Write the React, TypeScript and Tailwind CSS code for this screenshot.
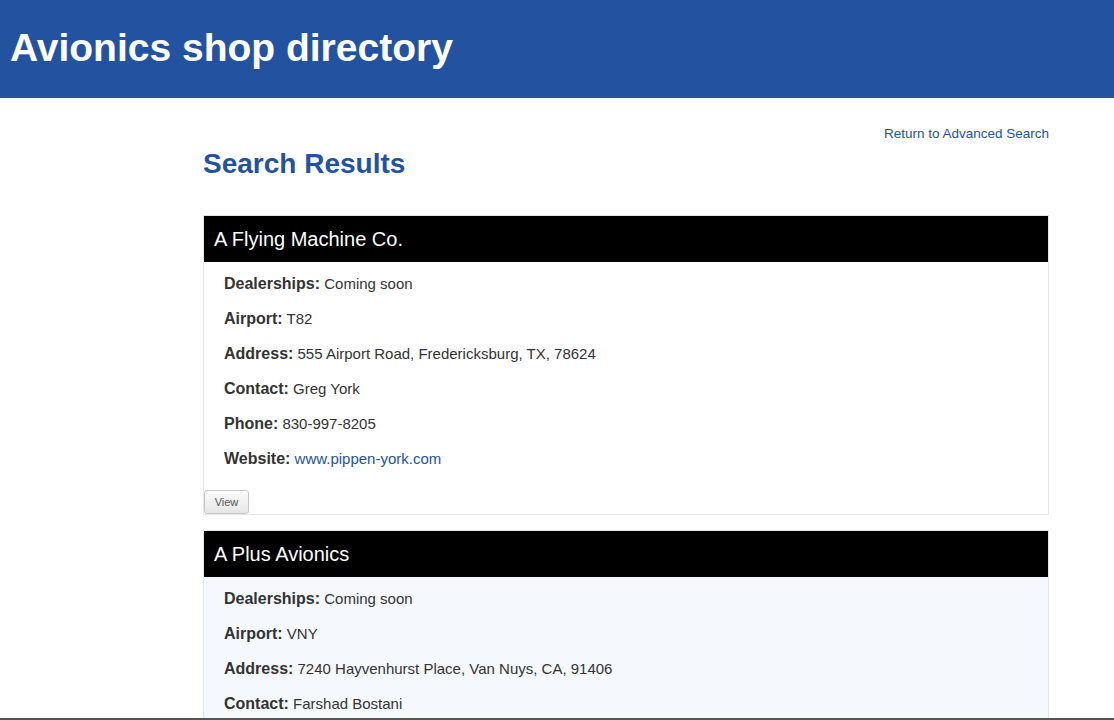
const shops = [
  {
    name: "A Flying Machine Co.",
    airport: "T82",
    address: "555 Airport Road, Fredericksburg, TX, 78624",
    contact: "Greg York",
    phone: "830-997-8205",
    website: "www.pippen-york.com",
  },
  {
    name: "A Plus Avionics",
    airport: "VNY",
    address: "7240 Hayvenhurst Place, Van Nuys, CA, 91406",
    contact: "Farshad Bostani",
    phone: "818-994-0100",
    website: "www.aplusavionics.com",
  },
];

type Shop = (typeof shops)[number];

function Row({ label, children }: { label: string; children: React.ReactNode }) {
  return (
    <p className="mb-[15px] text-[15px] leading-[20px] text-[#333]">
      <b className="text-[16px] font-bold">{label}:</b> {children}
    </p>
  );
}

function ShopCard({ shop, alt }: { shop: Shop; alt: boolean }) {
  return (
    <div className="mb-[15px] border border-[#e6e6e6]">
      <div className="flex h-[46px] items-center bg-black px-[10px] text-[20px] text-white">
        {shop.name}
      </div>
      <div className={alt ? "bg-[#f5f9fd] px-[20px] pt-[12px] pb-[6px]" : "bg-white px-[20px] pt-[12px] pb-[6px]"}>
        <Row label="Dealerships">Coming soon</Row>
        <Row label="Airport">{shop.airport}</Row>
        <Row label="Address">{shop.address}</Row>
        <Row label="Contact">{shop.contact}</Row>
        <Row label="Phone">{shop.phone}</Row>
        <Row label="Website">
          <a href="#" className="text-[#2353a0]">
            {shop.website}
          </a>
        </Row>
      </div>
      <button className="block h-[24px] w-[45px] rounded-[3px] border border-[#c8c8c8] bg-gradient-to-b from-[#fbfbfb] to-[#e6e6e6] text-[11px] text-[#555]">
        View
      </button>
    </div>
  );
}

export default function App() {
  return (
    <div className="min-h-screen bg-white font-['Liberation_Sans',Arial,sans-serif]">
      <header className="flex h-[98px] items-center bg-[#2353a0] px-[10px] pb-[2px]">
        <h1 className="text-[39px] font-bold text-white">Avionics shop directory</h1>
      </header>
      <main className="ml-[203px] w-[846px] pt-[26px]">
        <div className="text-right text-[13.5px] leading-[20px]">
          <a href="#" className="text-[#2353a0]">
            Return to Advanced Search
          </a>
        </div>
        <h2 className="mt-[4px] mb-[35px] text-[28px] leading-[32px] font-bold text-[#2353a0]">Search Results</h2>
        {shops.map((s, i) => (
          <ShopCard key={s.name} shop={s} alt={i % 2 === 1} />
        ))}
      </main>
      <div className="fixed inset-x-0 bottom-0 h-[2px] bg-[#555]" />
    </div>
  );
}
